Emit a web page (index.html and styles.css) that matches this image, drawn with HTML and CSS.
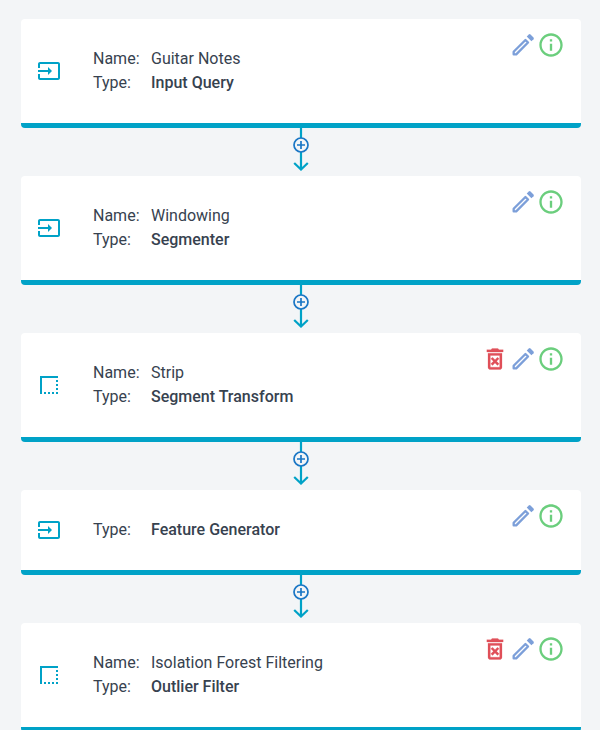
FILE: index.html
```html
<!DOCTYPE html>
<html lang="en">
<head>
<meta charset="utf-8">
<meta name="viewport" content="width=device-width, initial-scale=1">
<title>Pipeline</title>
<link rel="stylesheet" href="styles.css">
</head>
<body>
<svg class="sprite" aria-hidden="true">
  <symbol id="input" viewBox="0 0 24 24"><path d="M21 3.01H3c-1.1 0-2 .9-2 2V9h2V4.99h18v14.03H3V15H1v4.01c0 1.1.9 1.98 2 1.98h18c1.1 0 2-.88 2-1.98v-14c0-1.11-.9-2-2-2zM11 16l4-4-4-4v3H1v2h10v3z"/></symbol>
  <symbol id="border" viewBox="0 0 24 24"><path d="M15 21h2v-2h-2v2zm4 0h2v-2h-2v2zM7 21h2v-2H7v2zm4 0h2v-2h-2v2zm8-4h2v-2h-2v2zm0-4h2v-2h-2v2zM3 3v18h2V5h16V3H3zm16 6h2V7h-2v2z"/></symbol>
  <symbol id="info" viewBox="0 0 24 24"><path d="M11 7h2v2h-2zm0 4h2v6h-2zm1-9C6.48 2 2 6.48 2 12s4.480 10 10 10 10-4.480 10-10S17.520 2 12 2zm0 18c-4.410 0-8-3.590-8-8s3.590-8 8-8 8 3.590 8 8-3.590 8-8 8z"/></symbol>
  <symbol id="edit" viewBox="0 0 24 24"><path d="M14.100 7.700 4 17.800V20H6.200L16.300 9.900z" fill="none" stroke="currentColor" stroke-width="2" stroke-linejoin="round"/><path d="M21 5.600 18.400 3a1 1 0 0 0-1.400 0l-1.800 1.800 4 4L21 7a1 1 0 0 0 0-1.400z"/></symbol>
  <symbol id="delete" viewBox="0 0 24 24"><path d="M14.120 10.470L12 12.590l-2.130-2.120-1.410 1.410L10.590 14l-2.120 2.120 1.410 1.410L12 15.410l2.120 2.120 1.410-1.410L13.410 14l2.120-2.120zM15.500 4l-1-1h-5l-1 1H5v2h14V4zM6 19c0 1.100.900 2 2 2h8c1.100 0 2-.900 2-2V7H6v12zM8 9h8v10H8V9z" stroke="currentColor" stroke-width=".2"/></symbol>
  <symbol id="plus" viewBox="0 0 16 16"><circle cx="8" cy="8" r="7" fill="#f3f5f7" stroke="#1976c5" stroke-width="1.700"/><path d="M8 4v8M4 8h8" fill="none" stroke="#1976c5" stroke-width="1.700"/></symbol>
  <symbol id="arrow" viewBox="0 0 16 43"><path d="M8 0v41M1.200 35 8 41.500 14.800 35" fill="none" stroke="#00a2c7" stroke-width="2.200"/></symbol>
</svg>
<main class="pipeline">
  <section class="card">
    <svg class="kind"><use href="#input"/></svg>
    <dl class="details"><dt>Name:</dt><dd>Guitar Notes</dd><dt>Type:</dt><dd class="type">Input Query</dd></dl>
    <div class="actions">
      <button class="edit" aria-label="Edit"><svg><use href="#edit"/></svg></button>
      <button class="info" aria-label="Information"><svg><use href="#info"/></svg></button>
    </div>
  </section>
  <div class="connector"><svg class="arrow"><use href="#arrow"/></svg><button class="add" aria-label="Add step"><svg><use href="#plus"/></svg></button></div>
  <section class="card">
    <svg class="kind"><use href="#input"/></svg>
    <dl class="details"><dt>Name:</dt><dd>Windowing</dd><dt>Type:</dt><dd class="type">Segmenter</dd></dl>
    <div class="actions">
      <button class="edit" aria-label="Edit"><svg><use href="#edit"/></svg></button>
      <button class="info" aria-label="Information"><svg><use href="#info"/></svg></button>
    </div>
  </section>
  <div class="connector"><svg class="arrow"><use href="#arrow"/></svg><button class="add" aria-label="Add step"><svg><use href="#plus"/></svg></button></div>
  <section class="card">
    <svg class="kind"><use href="#border"/></svg>
    <dl class="details"><dt>Name:</dt><dd>Strip</dd><dt>Type:</dt><dd class="type">Segment Transform</dd></dl>
    <div class="actions">
      <button class="delete" aria-label="Delete"><svg><use href="#delete"/></svg></button>
      <button class="edit" aria-label="Edit"><svg><use href="#edit"/></svg></button>
      <button class="info" aria-label="Information"><svg><use href="#info"/></svg></button>
    </div>
  </section>
  <div class="connector"><svg class="arrow"><use href="#arrow"/></svg><button class="add" aria-label="Add step"><svg><use href="#plus"/></svg></button></div>
  <section class="card">
    <svg class="kind"><use href="#input"/></svg>
    <dl class="details"><dt>Type:</dt><dd class="type">Feature Generator</dd></dl>
    <div class="actions">
      <button class="edit" aria-label="Edit"><svg><use href="#edit"/></svg></button>
      <button class="info" aria-label="Information"><svg><use href="#info"/></svg></button>
    </div>
  </section>
  <div class="connector"><svg class="arrow"><use href="#arrow"/></svg><button class="add" aria-label="Add step"><svg><use href="#plus"/></svg></button></div>
  <section class="card">
    <svg class="kind"><use href="#border"/></svg>
    <dl class="details"><dt>Name:</dt><dd>Isolation Forest Filtering</dd><dt>Type:</dt><dd class="type">Outlier Filter</dd></dl>
    <div class="actions">
      <button class="delete" aria-label="Delete"><svg><use href="#delete"/></svg></button>
      <button class="edit" aria-label="Edit"><svg><use href="#edit"/></svg></button>
      <button class="info" aria-label="Information"><svg><use href="#info"/></svg></button>
    </div>
  </section>
</main>
</body>
</html>
```
FILE: styles.css
```css
* { box-sizing: border-box; }
html { scrollbar-width: none; }
body {
  margin: 0;
  background: #f3f5f7;
  color: #37424f;
  font: 16px/24px Roboto, sans-serif;
}
.sprite { position: absolute; width: 0; height: 0; }
.pipeline { padding: 19px 19px 0 21px; }
.card {
  display: flex;
  align-items: center;
  padding: 28px 16px;
  background: #fff;
  border-bottom: 5px solid #00a2c7;
  border-radius: 4px;
}
.kind { width: 24px; height: 24px; flex: none; fill: #00a2c7; }
.details {
  display: grid;
  grid-template-columns: 58px 1fr;
  flex: 1;
  margin: 0 0 0 32px;
}
.details dd { margin: 0; }
.type { font-weight: 500; }
.actions { display: flex; align-self: flex-start; height: 24px; margin-top: -16px; }
button {
  display: block;
  padding: 0;
  border: 0;
  background: none;
  color: inherit;
  cursor: pointer;
}
button svg { display: block; width: 100%; height: 100%; fill: currentColor; }
.actions button { width: 28px; height: 28px; }
.delete { color: #e04f59; }
.edit { color: #7c9fd9; }
.info { color: #6bce7d; }
.connector {
  position: relative;
  display: flex;
  justify-content: center;
  height: 48px;
}
.arrow { width: 16px; height: 43px; }
.add { position: absolute; top: 9px; width: 16px; height: 16px; }
```
